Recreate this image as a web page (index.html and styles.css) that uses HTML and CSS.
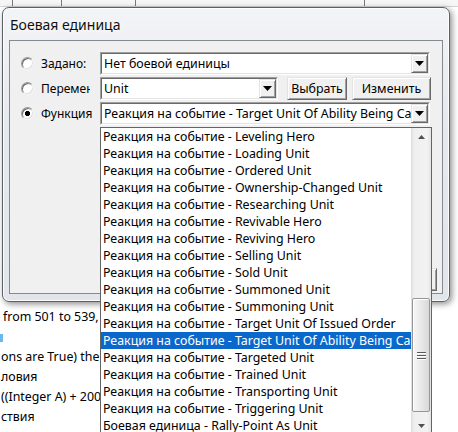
FILE: index.html
```html
<!DOCTYPE html>
<html>

<head>
    <title>Боевая единица</title>

    <link rel="stylesheet" href="styles.css">
</head>

<body>
    <!-- editor window behind the dialog -->
    <div class="app">
        <div class="app-header">
            <span class="col c1"></span>
            <span class="col c2"></span>
            <span class="col c3"></span>
            <span class="col c4"></span>
        </div>
        <div class="app-tree">
            <div class="tree-line">from 501 to 539,</div>
            <div class="tree-line"><span class="tree-icon"></span></div>
            <div class="tree-line">ons are True) then</div>
            <div class="tree-line">ловия</div>
            <div class="tree-line">((Integer A) + 200</div>
            <div class="tree-line">ствия</div>
        </div>
    </div>

    <div class="dialog">
        <div class="dialog-title">Боевая единица</div>

        <div class="client">
            <div class="row">
                <span class="radio"></span>
                <span class="label">Задано:</span>
                <div class="combo wide">
                    <div class="combo-inner">
                        <span class="combo-text">Нет боевой единицы</span>
                        <span class="combo-arrow"><svg width="9" height="5" viewBox="0 0 9 5"><polygon points="0,0 9,0 4.5,5" fill="#000"/></svg></span>
                    </div>
                </div>
            </div>

            <div class="row">
                <span class="radio"></span>
                <span class="label clip">Переменная:</span>
                <div class="combo short">
                    <div class="combo-inner">
                        <span class="combo-text">Unit</span>
                        <span class="combo-arrow"><svg width="9" height="5" viewBox="0 0 9 5"><polygon points="0,0 9,0 4.5,5" fill="#000"/></svg></span>
                    </div>
                </div>
                <button class="btn pick">Выбрать</button>
                <button class="btn edit">Изменить</button>
            </div>

            <div class="row">
                <span class="radio checked"></span>
                <span class="label">Функция</span>
                <div class="combo wide">
                    <div class="combo-inner">
                        <span class="combo-text">Реакция на событие - Target Unit Of Ability Being Cast</span>
                        <span class="combo-arrow"><svg width="9" height="5" viewBox="0 0 9 5"><polygon points="0,0 9,0 4.5,5" fill="#000"/></svg></span>
                    </div>

                    <!-- open drop-down list -->
                    <div class="dropdown">
                        <div class="items">
                            <div class="item">Реакция на событие - Leveling Hero</div>
                            <div class="item">Реакция на событие - Loading Unit</div>
                            <div class="item">Реакция на событие - Ordered Unit</div>
                            <div class="item">Реакция на событие - Ownership-Changed Unit</div>
                            <div class="item">Реакция на событие - Researching Unit</div>
                            <div class="item">Реакция на событие - Revivable Hero</div>
                            <div class="item">Реакция на событие - Reviving Hero</div>
                            <div class="item">Реакция на событие - Selling Unit</div>
                            <div class="item">Реакция на событие - Sold Unit</div>
                            <div class="item">Реакция на событие - Summoned Unit</div>
                            <div class="item">Реакция на событие - Summoning Unit</div>
                            <div class="item">Реакция на событие - Target Unit Of Issued Order</div>
                            <div class="item selected">Реакция на событие - Target Unit Of Ability Being Cast</div>
                            <div class="item">Реакция на событие - Targeted Unit</div>
                            <div class="item">Реакция на событие - Trained Unit</div>
                            <div class="item">Реакция на событие - Transporting Unit</div>
                            <div class="item">Реакция на событие - Triggering Unit</div>
                            <div class="item">Боевая единица - Rally-Point As Unit</div>
                        </div>
                        <div class="scrollbar">
                            <div class="sb-btn"><svg width="7" height="4" viewBox="0 0 7 4"><polygon points="3.5,0 7,4 0,4" fill="#505050"/></svg></div>
                            <div class="sb-track">
                                <div class="sb-thumb">
                                    <svg width="9" height="9" viewBox="0 0 9 9">
                                        <path d="M0 1.5h9M0 4.5h9M0 7.5h9" stroke="#5a5a5a" stroke-width="1"/>
                                        <path d="M0 2.5h9M0 5.5h9M0 8.5h9" stroke="#fff" stroke-width="1"/>
                                    </svg>
                                </div>
                            </div>
                            <div class="sb-btn"><svg width="7" height="4" viewBox="0 0 7 4"><polygon points="0,0 7,0 3.5,4" fill="#505050"/></svg></div>
                        </div>
                    </div>
                </div>
            </div>

            <div class="client-footer">
                <button class="btn ok">OK</button>
            </div>
        </div>
    </div>
</body>

</html>
```

FILE: styles.css
```css
body {
    margin: 0;
    width: 458px;
    height: 432px;
    overflow: hidden;
    position: relative;
    background-color: #fff;
    font-family: "Noto Sans", "Segoe UI", sans-serif;
    font-size: 12.4px;
    color: #000;
}

/* background editor */
.app-header {
    display: flex;
    height: 6px;
    background-color: #f6f6f6;
    border-bottom: 1px solid #d4d4d4;
}

.app-header .col {
    border-right: 1px solid #7a7a7a;
}

.c1 { width: 12px; }
.c2 { width: 48px; }
.c3 { width: 73px; }
.c4 { width: 228px; }

.app-tree {
    padding-top: 300px;
}

.tree-line {
    height: 20px;
    line-height: 20px;
    white-space: nowrap;
    padding-left: 1px;
}

.tree-line:first-child {
    padding-left: 3px;
}

.tree-icon {
    display: inline-block;
    width: 3px;
    height: 8px;
    margin-left: -1px;
    vertical-align: middle;
    background-color: #6db6ee;
}

/* dialog window */
.dialog {
    position: absolute;
    left: 2px;
    top: 7px;
    width: 448px;
    height: 295px;
    box-sizing: border-box;
    border: 1px solid #5b6068;
    border-radius: 7px;
    background: linear-gradient(#f2f4f6, #e6e9ed 40%, #e2e5e9);
    box-shadow: 2px 2px 6px rgba(0, 0, 0, 0.45), inset 0 0 0 1px rgba(255, 255, 255, 0.85);
    padding: 0 6px 7px 6px;
    display: flex;
    flex-direction: column;
}

.dialog-title {
    height: 32px;
    line-height: 33px;
    padding-left: 1px;
    font-size: 14px;
    color: #111;
    text-shadow: 0 0 6px #fff, 0 0 10px #fff;
}

.client {
    flex: 1;
    position: relative;
    background-color: #f0f0f0;
    border: 1px solid #858a91;
    padding: 11px 0 0 11px;
    display: flex;
    flex-direction: column;
    gap: 2px;
}

.row {
    display: flex;
    align-items: center;
    height: 23px;
}

.radio {
    flex: none;
    width: 13px;
    height: 13px;
    box-sizing: border-box;
    border-radius: 50%;
    border: 1px solid;
    border-color: #9a9a9a #f4f4f4 #f4f4f4 #9a9a9a;
    box-shadow: inset 1px 1px 0 #6b6b6b, inset -1px -1px 0 #dedede;
    background-color: #fff;
    margin-right: 7px;
}

.radio.checked {
    background: radial-gradient(circle, #000 0 2.3px, #fff 2.9px);
}

.label {
    flex: none;
    width: 49px;
    margin-right: 10px;
    font-size: 12px;
    white-space: nowrap;
}

.label.clip {
    overflow: hidden;
}

/* combo boxes */
.combo {
    position: relative;
    height: 23px;
    box-sizing: border-box;
    border: 1px solid;
    border-color: #a0a0a0 #fff #fff #a0a0a0;
}

.combo.wide {
    width: 330px;
}

.combo.short {
    width: 178px;
}

.combo-inner {
    height: 100%;
    box-sizing: border-box;
    border: 1px solid;
    border-color: #696969 #e3e3e3 #e3e3e3 #696969;
    background-color: #fff;
    display: flex;
}

.combo-text {
    flex: 1;
    padding-left: 2px;
    line-height: 19px;
    white-space: nowrap;
    overflow: hidden;
}

.combo-arrow,
.btn {
    box-sizing: border-box;
    border: 1px solid;
    border-color: #e3e3e3 #696969 #696969 #e3e3e3;
    box-shadow: inset 1px 1px 0 #fff, inset -1px -1px 0 #a0a0a0;
    background-color: #f0f0f0;
}

.combo-arrow {
    flex: none;
    width: 17px;
    height: 19px;
    display: flex;
    align-items: center;
    justify-content: center;
}

.btn {
    height: 23px;
    padding: 0;
    font-family: inherit;
    font-size: 12.4px;
    color: #000;
}

.btn.pick {
    width: 60px;
    margin-left: 9px;
}

.btn.edit {
    width: 79px;
    margin-left: 5px;
}

.client-footer {
    margin-top: auto;
    display: flex;
    justify-content: flex-end;
    padding: 0 5px 2px 0;
}

.btn.ok {
    width: 75px;
}

/* drop-down list */
.dropdown {
    position: absolute;
    left: -1px;
    top: 24px;
    width: 332px;
    height: 308px;
    box-sizing: border-box;
    border: 1px solid #646464;
    background-color: #fff;
    display: flex;
    z-index: 2;
}

.items {
    flex: 1;
    overflow: hidden;
}

.item {
    height: 17px;
    line-height: 17px;
    padding-left: 2px;
    white-space: nowrap;
    overflow: hidden;
}

.item.selected {
    background-color: #0a68cc;
    color: #fff;
}

.scrollbar {
    width: 20px;
    display: flex;
    flex-direction: column;
    background: linear-gradient(to right, #dcdcdc, #efefef 15%, #f2f2f2 80%, #e4e4e4);
}

.sb-btn {
    height: 17px;
    display: flex;
    align-items: center;
    justify-content: center;
}

.sb-track {
    flex: 1;
}

.sb-thumb {
    margin: 153px 1px 0 1px;
    height: 114px;
    box-sizing: border-box;
    border: 1px solid #969696;
    border-radius: 2px;
    background: linear-gradient(to right, #f6f6f6, #e9e9e9 50%, #d9d9d9);
    box-shadow: inset 1px 1px 0 #fff;
    display: flex;
    align-items: center;
    justify-content: center;
}
```
